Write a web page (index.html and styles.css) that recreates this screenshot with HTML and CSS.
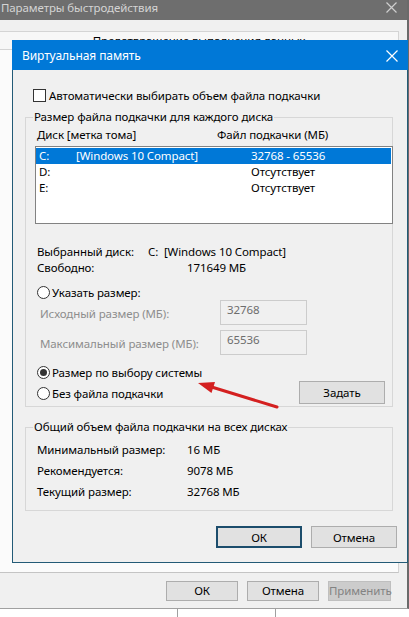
FILE: index.html
```html
<!DOCTYPE html>
<html lang="ru">
<head>
<meta charset="utf-8">
<title>Виртуальная память</title>
<link rel="stylesheet" href="styles.css">
</head>
<body>
<div class="screen">
  <div class="outer">
    <div class="outer-title">
      <span class="outer-title-text">Параметры быстродействия</span>
      <svg class="outer-close" width="11" height="11" viewBox="0 0 11 11"><path d="M0.5 0.5L10.5 10.5M10.5 0.5L0.5 10.5" stroke="#cfcfcf" stroke-width="1.2" fill="none"/></svg>
    </div>
    <div class="outer-body">
      <div class="tabrow"><div class="tab">Предотвращение выполнения данных</div></div>
      <div class="panel"></div>
      <div class="outer-buttons">
        <button class="btn obtn">ОК</button>
        <button class="btn obtn">Отмена</button>
        <button class="btn obtn disabled">Применить</button>
      </div>
    </div>
  </div>
  <div class="below">
    <div class="below-cell w177"></div>
    <div class="below-cell w98"></div>
    <div class="below-cell grow"></div>
  </div>

  <div class="dialog">
    <div class="dlg-title">
      <span>Виртуальная память</span>
      <svg class="dlg-close" width="12" height="12" viewBox="0 0 12 12"><path d="M0.5 0.5L11.5 11.5M11.5 0.5L0.5 11.5" stroke="#ffffff" stroke-width="1.2" fill="none"/></svg>
    </div>
    <div class="dlg-body">
      <div class="check-row">
        <span class="checkbox"></span>
        <span>Автоматически выбирать объем файла подкачки</span>
      </div>

      <fieldset class="group g1">
        <legend>Размер файла подкачки для каждого диска</legend>
        <div class="list-head">
          <span class="lh1">Диск [метка тома]</span>
          <span>Файл подкачки (МБ)</span>
        </div>
        <div class="listbox">
          <div class="lrow selected"><span class="c1">C:</span><span class="c2">[Windows 10 Compact]</span><span>32768 - 65536</span></div>
          <div class="lrow"><span class="c1">D:</span><span class="c2"></span><span>Отсутствует</span></div>
          <div class="lrow"><span class="c1">E:</span><span class="c2"></span><span>Отсутствует</span></div>
        </div>
        <div class="info first"><span class="ik1">Выбранный диск:</span><span>C:&nbsp;&nbsp;[Windows 10 Compact]</span></div>
        <div class="info"><span class="ik2">Свободно:</span><span>171649 МБ</span></div>

        <div class="radio-row r1"><span class="radio"></span><span>Указать размер:</span></div>
        <div class="field-row f1"><span class="flabel">Исходный размер (МБ):</span><span class="fbox">32768</span></div>
        <div class="field-row f2"><span class="flabel">Максимальный размер (МБ):</span><span class="fbox">65536</span></div>

        <div class="radio-row r2"><span class="radio on"></span><span>Размер по выбору системы</span></div>
        <div class="radio-btn-row">
          <div class="radio-row r3"><span class="radio"></span><span>Без файла подкачки</span></div>
          <button class="btn set">Задать</button>
        </div>
      </fieldset>

      <fieldset class="group g2">
        <legend>Общий объем файла подкачки на всех дисках</legend>
        <div class="sum first"><span class="sk">Минимальный размер:</span><span>16 МБ</span></div>
        <div class="sum"><span class="sk">Рекомендуется:</span><span>9078 МБ</span></div>
        <div class="sum"><span class="sk">Текущий размер:</span><span>32768 МБ</span></div>
      </fieldset>

      <div class="dlg-buttons">
        <button class="btn dbtn default">ОК</button>
        <button class="btn dbtn">Отмена</button>
      </div>
    </div>
  </div>

  <svg class="arrow" width="409" height="617" viewBox="0 0 409 617">
    <line x1="277" y1="407" x2="210" y2="386.5" stroke="#d42020" stroke-width="3" stroke-linecap="round"/>
    <polygon points="198,383 215,382 211.5,393" fill="#d42020"/>
  </svg>
</div>
</body>
</html>
```

FILE: styles.css
```css
* { box-sizing: border-box; }
html, body { margin: 0; padding: 0; }
body {
  width: 409px;
  height: 617px;
  overflow: hidden;
  background: #ffffff;
  font-family: "Noto Sans", "Liberation Sans", sans-serif;
  font-size: 11.5px;
  letter-spacing: -0.1px;
  color: #000;
}
.screen {
  position: relative;
  width: 409px;
  height: 617px;
}
.outer {
  width: 409px;
  height: 609px;
  display: flex;
  flex-direction: column;
  border-bottom: 1px solid #a0a0a0;
  border-right: 2px solid #6a6a6a;
}
.outer-title {
  height: 20px;
  background: #6e6e6e;
  display: flex;
  align-items: flex-start;
  justify-content: space-between;
  padding: 0 10px 0 1px;
}
.outer-title-text {
  color: #d4d4d4;
  font-size: 11.5px;
  line-height: 15px;
}
.outer-close { margin-top: 2px; }
.outer-body {
  flex: 1;
  background: #f0f0f0;
  display: flex;
  flex-direction: column;
  padding-top: 11px;
}
.tabrow {
  width: 399px;
  height: 18px;
  border-top: 1px solid #d4d4d4;
  border-right: 1px solid #d4d4d4;
  background: #f7f7f7;
}
.tab {
  text-align: center;
  line-height: 17px;
}
.panel {
  width: 399px;
  height: 524px;
  background: #fbfbfb;
  border-top: 1px solid #d4d4d4;
  border-right: 1px solid #d4d4d4;
  border-bottom: 1px solid #c4c4c4;
}
.outer-buttons {
  display: flex;
  justify-content: flex-end;
  gap: 9px;
  padding-right: 16px;
  margin-top: 8px;
}
.btn {
  font-family: inherit;
  font-size: 11.5px;
  letter-spacing: -0.1px;
  color: #000;
  background: #e1e1e1;
  border: 1px solid #adadad;
  padding: 0;
  margin: 0;
}
.obtn { width: 72px; height: 20px; line-height: 18px; }
.obtn.disabled {
  width: 63px;
  background: #cccccc;
  border-color: #bfbfbf;
  color: #838383;
}
.below {
  display: flex;
  height: 8px;
}
.below-cell { border-right: 1px solid #a0a0a0; height: 8px; }
.w177 { width: 178px; }
.w98 { width: 98px; }
.grow { flex: 1; border-right: 0; }

.dialog {
  position: absolute;
  left: 12px;
  top: 40px;
  width: 396px;
  height: 523px;
  background: #f0f0f0;
  border: 1px solid #235b77;
  border-top: 0;
  display: flex;
  flex-direction: column;
}
.dlg-title {
  height: 30px;
  margin: 0 -1px;
  background: #0078d7;
  color: #fff;
  font-size: 12px;
  display: flex;
  align-items: center;
  justify-content: space-between;
  padding: 1px 10px 0 10px;
}
.dlg-body {
  padding: 17px 14px 0 12px;
  display: flex;
  flex-direction: column;
}
.check-row {
  display: flex;
  align-items: center;
  height: 16px;
  padding-left: 8px;
  gap: 3px;
}
.checkbox {
  width: 13px;
  height: 13px;
  border: 1px solid #333;
  background: #fff;
}
.group {
  margin: 0;
  padding: 0;
  border: 1px solid #d7d7d7;
  min-width: 0;
}
.group legend {
  padding: 0 1px;
  margin-left: 7px;
  line-height: 16px;
}
.g1 { margin-top: 6px; padding-bottom: 2px; }
.list-head {
  display: flex;
  margin-top: 2px;
  padding-left: 11px;
  line-height: 16px;
}
.lh1 { width: 180px; }
.listbox {
  margin-top: 3px;
  margin-left: 9px;
  width: 358px;
  height: 78px;
  background: #fff;
  border: 1px solid #828282;
  padding-top: 1px;
}
.lrow {
  display: flex;
  height: 16px;
  line-height: 16px;
  padding-left: 3px;
  margin-right: 1px;
}
.lrow.selected { background: #0078d7; color: #fff; }
.c1 { width: 37px; }
.c2 { width: 175px; }
.info {
  display: flex;
  line-height: 16px;
  padding-left: 11px;
}
.info.first { margin-top: 20px; }
.ik1 { width: 111px; }
.ik2 { width: 150px; }
.radio-row {
  display: flex;
  align-items: center;
  height: 16px;
  padding-left: 11px;
  gap: 2px;
}
.radio {
  width: 13px;
  height: 13px;
  border: 1px solid #333;
  border-radius: 50%;
  background: #fff;
  position: relative;
}
.radio.on::after {
  content: "";
  position: absolute;
  left: 2px;
  top: 2px;
  width: 7px;
  height: 7px;
  border-radius: 50%;
  background: #333;
}
.r1 { margin-top: 9px; height: 15px; }
.field-row {
  display: flex;
  align-items: center;
  height: 25px;
  padding-left: 14px;
}
.f2 { margin-top: 5px; }
.flabel { width: 180px; color: #8d8d8d; padding-top: 2px; }
.fbox {
  width: 87px;
  height: 25px;
  border: 1px solid #cccccc;
  padding: 1px 0 0 6px;
  line-height: 16px;
  color: #6d6d6d;
  align-self: flex-start;
}
.r2 { margin-top: 9px; }
.radio-btn-row {
  display: flex;
  align-items: center;
  justify-content: space-between;
  margin-top: 1px;
  padding-right: 7px;
}
.r3 { padding-top: 2px; }
.set { width: 86px; height: 23px; }
.g2 { margin-top: 12px; padding-bottom: 8px; }
.sum {
  display: flex;
  line-height: 21px;
  padding-left: 11px;
}
.sum.first { margin-top: 4px; }
.sk { width: 150px; }
.dlg-buttons {
  display: flex;
  justify-content: flex-end;
  gap: 9px;
  margin-top: 15px;
  margin-right: -4px;
}
.dbtn { width: 86px; height: 22px; }
.dbtn.default { border: 2px solid #1c4d6c; }
.arrow {
  position: absolute;
  left: 0;
  top: 0;
  pointer-events: none;
}
```
